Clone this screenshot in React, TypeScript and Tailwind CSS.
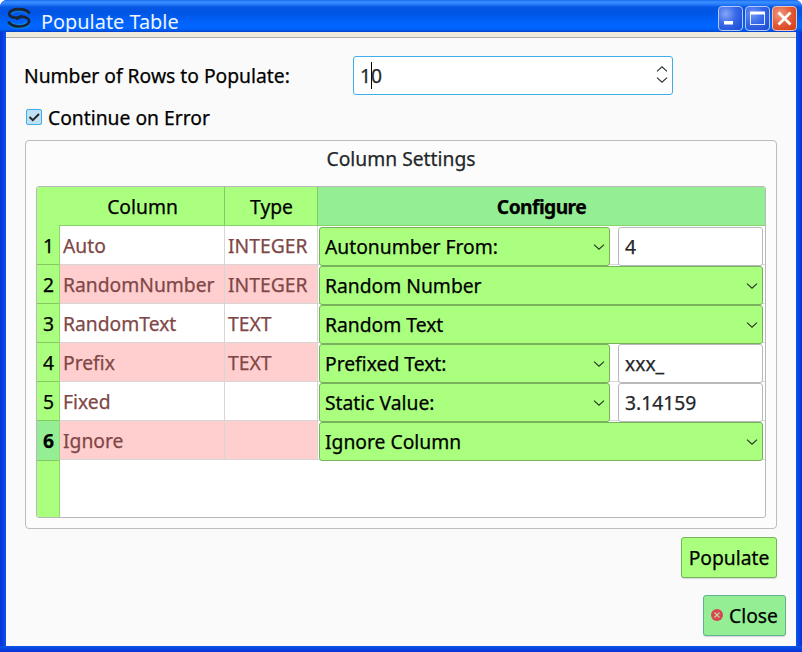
import React from "react";

type Row = { name: string; type: string; mode: string; value?: string };

const rows: Row[] = [
  { name: "Auto", type: "INTEGER", mode: "Autonumber From:", value: "4" },
  { name: "RandomNumber", type: "INTEGER", mode: "Random Number" },
  { name: "RandomText", type: "TEXT", mode: "Random Text" },
  { name: "Prefix", type: "TEXT", mode: "Prefixed Text:", value: "xxx_" },
  { name: "Fixed", type: "", mode: "Static Value:", value: "3.14159" },
  { name: "Ignore", type: "", mode: "Ignore Column" },
];

function Chevron({ up = false }: { up?: boolean }) {
  return (
    <svg width="12" height="6" viewBox="0 0 12 6" fill="none" stroke="#26312a" strokeWidth="1.1" className="shrink-0">
      <path d={up ? "M1 5.400 L6 0.800 L11 5.400" : "M1 0.600 L6 5.200 L11 0.600"} />
    </svg>
  );
}

function Combo({ label, wide }: { label: string; wide: boolean }) {
  return (
    <div
      className={`flex h-[39px] shrink-0 items-center justify-between rounded-[3px] border border-[#78b25a] bg-[#aaff7f] pr-[4px] pl-[5px] text-black ${
        wide ? "w-[444px]" : "w-[291px]"
      }`}
    >
      <span>{label}</span>
      <Chevron />
    </div>
  );
}

function Logo() {
  return (
    <svg width="24" height="22" viewBox="0 0 24 22" fill="none" className="shrink-0">
      <g stroke="#1593c4" strokeWidth="1.200" opacity="0.7">
        <path d="M21 7.500 C17 3.500 7 3.500 4 7.500" />
        <path d="M4 15 C7 18.500 17 18.500 20 15" />
        <path d="M2 18 C6 22.500 18 22.500 22.500 18" />
      </g>
      <g stroke="#1b2433" strokeWidth="2.600" strokeLinejoin="round">
        <path d="M22.500 6.500 C19 0.800 5 0.800 2.300 6 C1.300 9.500 6 10.800 10.500 10.800 L15.500 9" />
        <path d="M1.300 14.500 C5 21 19 21 22 15 C23 11.500 18.500 9.800 14 9.800 L9 12" />
      </g>
    </svg>
  );
}

function TitleBar() {
  return (
    <header className="flex h-8 bg-[linear-gradient(180deg,#1a6af0_0px,#3a91ff_2px,#2c80fc_4px,#0758e4_7px,#0054e3_12px,#0062fa_22px,#0066ff_27px,#005cf2_30px,#0042c8_32px)] pl-[7px]">
      <div className="pt-[7px]"><Logo /></div>
      <h1 className="ml-[10px] pt-[8px] text-[19.900px] leading-[27px] font-normal text-[#eef4ff]">Populate Table</h1>
      <div className="mt-[6px] mr-[5px] ml-auto flex gap-[2px]">
        <button className="h-[25px] w-[25px] rounded-[4px] border border-[#b5c9f4] bg-[radial-gradient(circle_at_30%_30%,#86a7f7,#3768e8_45%,#1848cf)]">
          <svg width="23" height="23"><rect x="5" y="14" width="9" height="3.500" fill="#fff" /></svg>
        </button>
        <button className="h-[25px] w-[25px] rounded-[4px] border border-[#b5c9f4] bg-[radial-gradient(circle_at_30%_30%,#6d94f5,#3768e8_45%,#1848cf)]">
          <svg width="23" height="23" fill="none" stroke="#fff"><rect x="4.500" y="5.500" width="14" height="12" strokeOpacity=".85" /><path d="M4 6 H19" strokeWidth="3" /></svg>
        </button>
        <button className="h-[25px] w-[25px] rounded-[4px] border border-[#f2c5b8] bg-[radial-gradient(circle_at_30%_30%,#f09b81,#e25a35_50%,#cf3c12)]">
          <svg width="23" height="23" stroke="#fff" strokeWidth="2.800"><path d="M5.500 5.500 L17.500 17.500 M17.500 5.500 L5.500 17.500" /></svg>
        </button>
      </div>
    </header>
  );
}

function SettingsTable() {
  return (
    <div className="flex h-[332px] w-[730px] overflow-hidden rounded-[3px] border border-[#b7b8b8] bg-white">
      <div className="w-[23px] shrink-0 border-r border-[#92d86e] bg-[#aaff7f] pt-[39px] text-center text-black">
        {rows.map((r, i) => (
          <div
            key={r.name}
            className={`border-b border-[#86c964] pl-px leading-[40px] ${i === 5 ? "h-10 bg-[#94ef94] font-bold" : "h-[39px]"}`}
          >
            {i + 1}
          </div>
        ))}
      </div>
      <div className="w-[705px] shrink-0">
        <div className="-ml-px flex h-[39px] border-b border-[#86d26c] bg-[#aaff7f] text-center leading-[39px] text-black">
          <div className="w-[166px] border-r border-[#86c964] pl-[2px]">Column</div>
          <div className="w-[93px] border-r border-[#86c964] pl-px">Type</div>
          <div className="flex-1 bg-[#94ef94] font-bold tracking-[-0.600px]">Configure</div>
        </div>
        {rows.map((r, i) => (
          <div key={r.name} className="flex h-[39px] text-[#7f4747]">
            <div className={`w-[165px] border-r border-b border-[#d6d6d6] pl-[3px] leading-[40px] ${i % 2 ? "bg-[#ffcece]" : ""}`}>{r.name}</div>
            <div className={`w-[93px] border-r border-b border-[#d6d6d6] pl-[3px] leading-[40px] ${i % 2 ? "bg-[#ffcece]" : ""}`}>{r.type}</div>
            <div className="flex h-[39px] flex-1 border-b border-[#d6d6d6] pt-px pl-px">
              <Combo label={r.mode} wide={!r.value} />
              {r.value && (
                <div className="ml-2 h-[39px] w-[145px] rounded-[3px] border border-[#b8b9ba] bg-white pl-[6px] leading-[38px] text-[#232629]">{r.value}</div>
              )}
            </div>
          </div>
        ))}
      </div>
    </div>
  );
}

export default function App() {
  return (
    <div className="h-[652px] w-[802px] bg-white">
      <div className="flex h-full flex-col overflow-hidden rounded-t-[7px] bg-[#0845e0] font-['Noto_Sans',sans-serif] text-[19.300px] leading-[29.100px] text-[#232629]">
        <TitleBar />
        <div className="flex flex-1 bg-[linear-gradient(90deg,#0831d9_0px,#0855e8_6px,#0855e8_796px,#0831d9_802px)] px-[6px]">
          <main className="flex-1 border-t-[5px] border-[#efebdc] bg-[#fafafa] [-webkit-text-stroke:0.25px]">
            <div className="border-t border-[#adadad] pt-[18px] pl-[19px]">
              <div className="flex h-[39px] items-center">
                <label className="-ml-px w-[329px] text-black">Number of Rows to Populate:</label>
                <div className="flex h-[39px] w-[320px] items-center justify-between rounded-[3px] border border-[#3daee9] bg-white pr-[4px] pl-[6px]">
                  <span className="flex items-center">1<i className="-mr-px h-[27px] w-px bg-black" />0</span>
                  <span className="flex flex-col gap-[5px] pb-[2px]"><Chevron up /><Chevron /></span>
                </div>
              </div>
              <label className="mt-[8px] flex h-[29px] items-center gap-[6px] pl-px text-black">
                <span className="-mt-px flex h-4 w-4 items-center justify-center rounded-[2px] border border-[#3daee9] bg-[#bfe1f3]">
                  <svg width="14" height="14" fill="none" stroke="#232629" strokeWidth="2"><path d="M2.500 7 L5.800 10.200 L12 4" /></svg>
                </span>
                <span className="pt-px">Continue on Error</span>
              </label>
              <section className="mt-[8px] h-[389px] w-[752px] rounded-[4px] border border-[#bcbdbd] bg-[#fcfcfc] pl-[10px]">
                <h2 className="h-[45px] w-[730px] text-center leading-[36px] font-normal">Column Settings</h2>
                <SettingsTable />
              </section>
              <div className="mt-[8px] flex w-[761px] flex-col items-end gap-[17px] text-black">
                <button className="mr-[9px] h-[41px] w-[96px] rounded-[3px] border border-[#78b25a] bg-[#aaff7f] pt-px shadow-[0_1px_1px_#00000025]">Populate</button>
                <button className="flex h-[41px] w-[83px] items-center gap-[6px] rounded-[3px] border border-[#5fb292] bg-[#94ef94] pl-[7px] shadow-[0_1px_1px_#00000025]">
                  <svg width="12" height="12" className="-mt-px"><circle cx="6" cy="6" r="6" fill="#da4453" /><path d="M3.500 3.500 L8.500 8.500 M8.500 3.500 L3.500 8.500" stroke="#b9dda0" strokeWidth="1.200" /></svg>
                  <span className="pt-px">Close</span>
                </button>
              </div>
            </div>
          </main>
        </div>
        <div className="h-[6px] bg-[linear-gradient(180deg,#0855e8,#0831d9)]" />
      </div>
    </div>
  );
}
